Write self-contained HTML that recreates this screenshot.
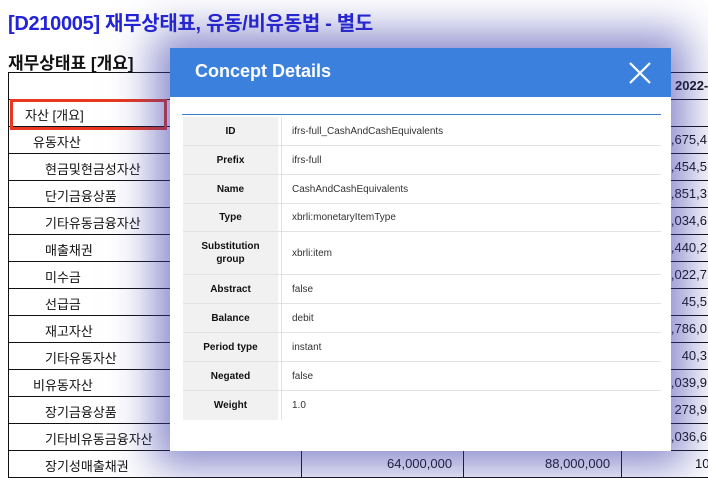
<!DOCTYPE html>
<html><head><meta charset="utf-8"><style>
*{margin:0;padding:0;box-sizing:border-box}
body{width:708px;height:469px;overflow:hidden;background:#fff;position:relative;font-family:"Liberation Sans","Noto Sans CJK KR",sans-serif;color:#111}
.t{position:absolute;left:8px;top:7px;font-size:20px;font-weight:bold;color:#2323d8;letter-spacing:-0.3px}
.st{position:absolute;left:8px;top:49px;font-size:17px;font-weight:bold}
.row{position:absolute;left:8px;width:720px;height:28px;border:1px solid #111;border-top:none;font-size:13px}
.row span{position:absolute;top:5px}
.num{position:absolute;right:20px;top:5px}
.rc{position:absolute;left:612px;top:0;bottom:0;border-left:1px solid #111}
.hl{position:absolute;left:10px;top:99px;width:157px;height:31px;border:3px solid #e8381f}
.modal{position:absolute;left:170px;top:48px;width:501px;height:403px;background:#fff;box-shadow:0 0 40px 16px rgba(60,60,170,0.6)}
.mh{height:49px;background:#3b80dd;color:#fff;font-size:18px;font-weight:bold;padding:13px 0 0 25px}
.x{position:absolute;right:20px;top:14px}
.line{position:absolute;left:12px;top:66px;width:479px;height:1px;background:#3b7fc8}
.mr{position:absolute;left:13px;width:478px;font-size:10px;border-bottom:1px solid #e2e2e2}
.mr .l{position:absolute;left:0;top:0;bottom:0;width:95px;background:#f1f1f1;font-weight:bold;display:flex;align-items:center;justify-content:center;text-align:center;line-height:13px}
.mr .v{position:absolute;left:98px;top:0;bottom:0;border-left:1px solid #e2e2e2;display:flex;align-items:center;padding-left:10px;color:#333}
</style></head><body>
<div class="t">[D210005] 재무상태표, 유동/비유동법 - 별도</div>
<div class="st">재무상태표 [개요]</div>
<div class="row" style="top:72px;border-top:1px solid #111;height:28px"><div class="rc" style="background:#e4e4e4"></div><span style="left:666px;font-weight:bold;font-size:13px">2022-1</span></div>
<div class="row" style="top:100px;height:27px"><span style="left:16px">자산 [개요]</span></div>
<div class="row" style="top:127px;height:27px"><span style="left:24px">유동자산</span><div class="rc"></div><span class="num">7,675,4</span></div>
<div class="row" style="top:154px;height:27px"><span style="left:36px">현금및현금성자산</span><div class="rc"></div><span class="num">2,454,5</span></div>
<div class="row" style="top:181px;height:27px"><span style="left:36px">단기금융상품</span><div class="rc"></div><span class="num">1,851,3</span></div>
<div class="row" style="top:208px;height:27px"><span style="left:36px">기타유동금융자산</span><div class="rc"></div><span class="num">5,034,6</span></div>
<div class="row" style="top:235px;height:27px"><span style="left:36px">매출채권</span><div class="rc"></div><span class="num">3,440,2</span></div>
<div class="row" style="top:262px;height:27px"><span style="left:36px">미수금</span><div class="rc"></div><span class="num">1,022,7</span></div>
<div class="row" style="top:289px;height:27px"><span style="left:36px">선급금</span><div class="rc"></div><span class="num">45,5</span></div>
<div class="row" style="top:316px;height:27px"><span style="left:36px">재고자산</span><div class="rc"></div><span class="num">2,786,0</span></div>
<div class="row" style="top:343px;height:27px"><span style="left:36px">기타유동자산</span><div class="rc"></div><span class="num">40,3</span></div>
<div class="row" style="top:370px;height:27px"><span style="left:24px">비유동자산</span><div class="rc"></div><span class="num">9,039,9</span></div>
<div class="row" style="top:397px;height:27px"><span style="left:36px">장기금융상품</span><div class="rc"></div><span class="num">278,9</span></div>
<div class="row" style="top:424px;height:27px"><span style="left:36px">기타비유동금융자산</span><div class="rc"></div><span class="num">1,036,6</span></div>
<div class="row" style="top:451px;height:27px"><span style="left:36px">장기성매출채권</span><div class="rc" style="left:292px"></div><div class="rc" style="left:454px"></div><div class="rc"></div><span style="left:378px">64,000,000</span><span style="left:536px">88,000,000</span><span style="left:686px">10</span></div>
<div class="hl"></div>
<div class="modal">
<div class="mh">Concept Details</div>
<svg class="x" width="22" height="22" viewBox="0 0 22 22"><path d="M1 1L21 21M21 1L1 21" stroke="#fff" stroke-width="2.2"/></svg>
<div class="line"></div>
<div class="mr" style="top:69px;height:29px"><div class="l">ID</div><div class="v">ifrs-full_CashAndCashEquivalents</div></div>
<div class="mr" style="top:98px;height:29px"><div class="l">Prefix</div><div class="v">ifrs-full</div></div>
<div class="mr" style="top:127px;height:29px"><div class="l">Name</div><div class="v">CashAndCashEquivalents</div></div>
<div class="mr" style="top:156px;height:28px"><div class="l">Type</div><div class="v">xbrli:monetaryItemType</div></div>
<div class="mr" style="top:184px;height:43px"><div class="l">Substitution<br>group</div><div class="v">xbrli:item</div></div>
<div class="mr" style="top:227px;height:29px"><div class="l">Abstract</div><div class="v">false</div></div>
<div class="mr" style="top:256px;height:29px"><div class="l">Balance</div><div class="v">debit</div></div>
<div class="mr" style="top:285px;height:29px"><div class="l">Period type</div><div class="v">instant</div></div>
<div class="mr" style="top:314px;height:29px"><div class="l">Negated</div><div class="v">false</div></div>
<div class="mr" style="top:343px;height:29px;border-bottom:none"><div class="l">Weight</div><div class="v">1.0</div></div>
</div>
</body></html>
